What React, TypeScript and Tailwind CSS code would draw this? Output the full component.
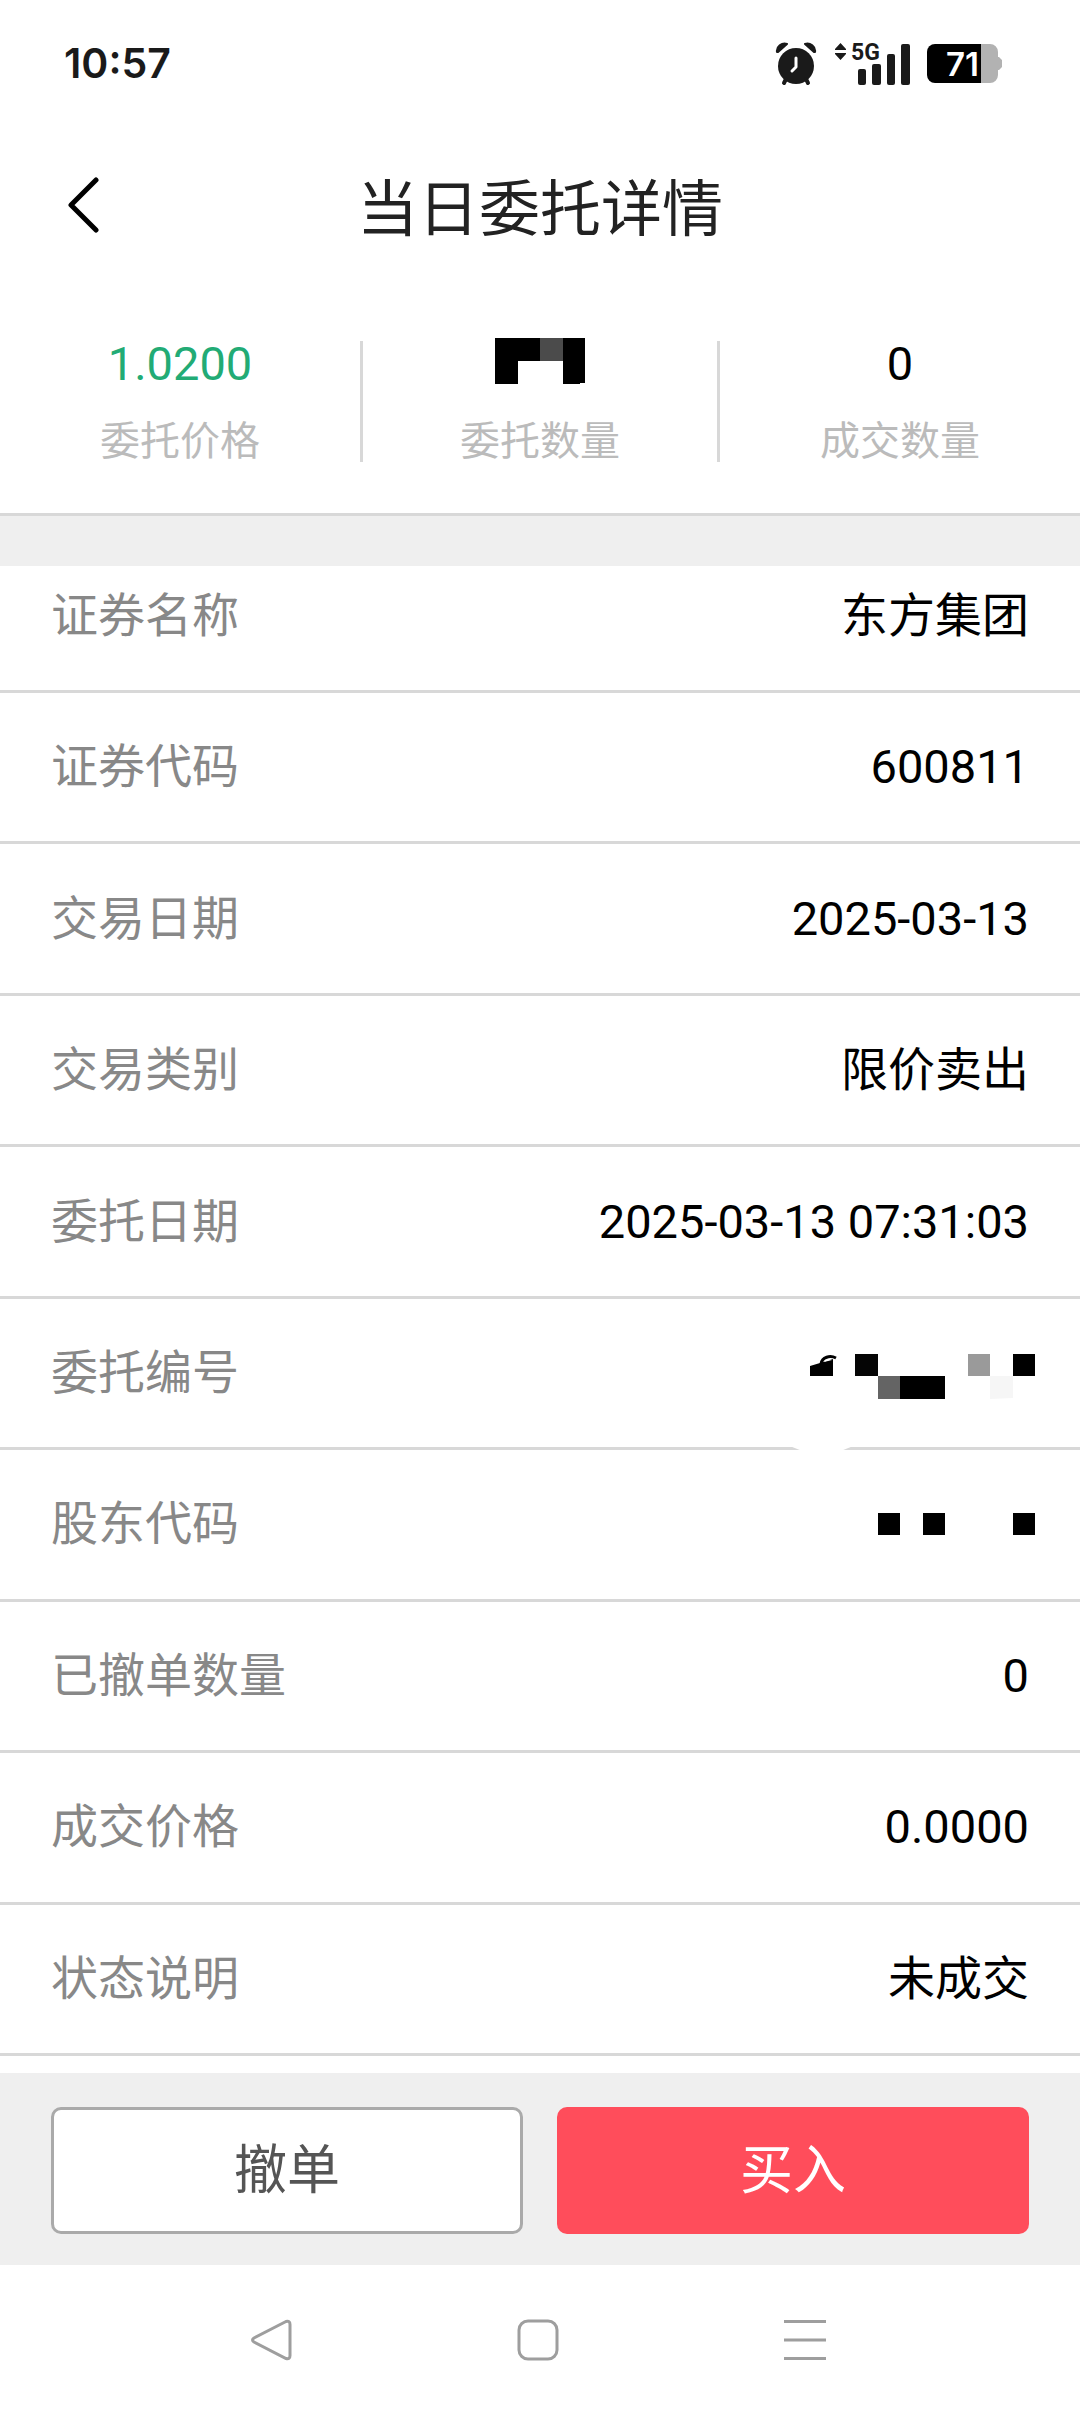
import type { ReactNode } from 'react';

interface DetailItem {
  label: string;
  value: ReactNode;
}

// Mosaic over the order quantity
function MaskedQuantity() {
  return (
    <svg width="90" height="46" viewBox="0 0 90 46" role="img" aria-label="已隐藏" shapeRendering="crispEdges">
      <path d="M0 0h90v45l-11 1H68V23H23v23H0z" fill="#000" />
      <path d="M45 0h23v23H45z" fill="#4b4b4b" />
    </svg>
  );
}

// Mosaic over the order number, the eraser stroke also cuts the row border
function MaskedOrderNo() {
  return (
    <svg
      className="absolute right-[45px] -bottom-[3px]"
      width="245"
      height="100"
      viewBox="0 0 245 100"
      role="img"
      aria-label="已隐藏"
    >
      <path d="M1 96.500h61L52 100.500H11z" fill="#fff" />
      <path d="M20 16l10-3L43 9v17H20z" fill="#000" />
      <path d="M31 14c1-7 9-9 15-6" fill="none" stroke="#000" strokeWidth="3" />
      <path d="M34 12c2-3 5-3 8-2z" fill="#fff" />
      <path d="M65 4h23v22H65z" fill="#050505" />
      <path d="M88 26h22v23H88z" fill="#646464" />
      <path d="M110 26h45v23h-45z" fill="#000" />
      <path d="M178 4h22v22h-22z" fill="#9a9a9a" />
      <path d="M200 26h23v22l-23 1z" fill="#f6f6f6" />
      <path d="M223 4h22v22h-22z" fill="#000" />
    </svg>
  );
}

function MaskedHolderCode() {
  return (
    <svg className="-mr-[6px]" width="157" height="22" viewBox="0 0 157 22" role="img" aria-label="已隐藏">
      <path d="M0 0h22v22H0zM45 0h22v22H45zM135 0h22v22h-22z" fill="#000" />
    </svg>
  );
}

const details: DetailItem[] = [
  { label: '证券代码', value: '600811' },
  { label: '交易日期', value: '2025-03-13' },
  { label: '交易类别', value: '限价卖出' },
  { label: '委托日期', value: '2025-03-13 07:31:03' },
  { label: '委托编号', value: <MaskedOrderNo /> },
  { label: '股东代码', value: <MaskedHolderCode /> },
  { label: '已撤单数量', value: '0' },
  { label: '成交价格', value: '0.0000' },
  { label: '状态说明', value: '未成交' },
];

function StatusBar() {
  return (
    <div className="flex h-[127px] items-center justify-between pr-[78px] pl-16 text-[#1a1a1a]">
      <span className="font-[Inter,sans-serif] text-[41px] leading-none font-semibold">10:57</span>
      <div className="flex items-center">
        <svg width="42" height="44" viewBox="-1 -1 42 44" aria-hidden="true">
          <circle cx="20" cy="23" r="18" fill="currentColor" />
          <path
            d="M1 9C0 4 6-1 11 1L2 9zM39 9C40 4 34-1 29 1l9 8z"
            fill="currentColor"
            stroke="currentColor"
            strokeWidth="2"
            strokeLinejoin="round"
          />
          <path d="M10 36l-2 4M30 36l2 4" stroke="currentColor" strokeWidth="4" strokeLinecap="round" />
          <path
            d="M20 15v9l-4 4"
            stroke="#fff"
            strokeWidth="3"
            strokeLinecap="round"
            strokeLinejoin="round"
            fill="none"
          />
        </svg>
        <svg className="ml-[18px]" width="75" height="58" viewBox="0 -8 75 58" role="img" aria-label="5G">
          <path d="M5.500 0L11 6v1H0V6zM5.500 17L11 11v-1H0v1z" fill="currentColor" />
          <text x="16" y="17" fontSize="23" fontWeight="700" fill="currentColor" fontFamily="Roboto">
            5G
          </text>
          <rect x="23" y="26" width="8" height="16" rx="2" fill="currentColor" />
          <rect x="37" y="21" width="9" height="21" rx="2" fill="currentColor" />
          <rect x="52" y="11" width="8" height="31" rx="2" fill="currentColor" />
          <rect x="66" y="1" width="9" height="41" rx="2" fill="currentColor" />
        </svg>
        <svg className="ml-[17px]" width="75" height="39" viewBox="0 0 75 39" role="img" aria-label="71%">
          <path d="M54 0h9a8 8 0 0 1 8 8v5h1l3 3v7l-3 3h-1v5a8 8 0 0 1-8 8h-9z" fill="#b2b2b2" />
          <path d="M8 0h46v39H8a8 8 0 0 1-8-8V8a8 8 0 0 1 8-8z" fill="#000" />
          <text x="19" y="32" fontSize="33" fontWeight="600" fill="#fff" fontFamily="Inter">
            71
          </text>
        </svg>
      </div>
    </div>
  );
}

function SummaryItem({ label, children }: { label: string; children: ReactNode }) {
  return (
    <div className="flex h-[121px] flex-col items-center gap-9 border-[#d8d8d8] nth-2:border-x-3">
      <dd className="order-1 flex h-11 items-center text-[47px] leading-none">{children}</dd>
      <dt className="order-2 text-[40px] leading-[42px] text-[#bbb]">{label}</dt>
    </div>
  );
}

function DetailRow({ label, value }: DetailItem) {
  return (
    <div className="relative flex min-h-[127px] flex-1 items-center justify-between border-b-3 border-[#d8d8d8] px-[51px]">
      <dt className="text-[#888]">{label}</dt>
      <dd>{value}</dd>
    </div>
  );
}

export default function App() {
  return (
    <div className="flex min-h-screen flex-col bg-white font-[Roboto,'Noto_Sans_CJK_SC',sans-serif] text-black">
      <StatusBar />

      <header className="grid h-[162px] grid-cols-[1fr_auto_1fr] items-center px-16">
        <button type="button" aria-label="返回" className="justify-self-start pb-1.5">
          <svg width="38" height="56" viewBox="0 0 38 56" fill="none">
            <path d="M32 3L7 28l25 25" stroke="#000" strokeWidth="5" strokeLinecap="round" strokeLinejoin="round" />
          </svg>
        </button>
        <h1 className="pt-1 text-[61px] leading-none text-[#222]">当日委托详情</h1>
      </header>

      <dl className="grid grid-cols-3 border-b-3 border-[#d8d8d8] pt-[52px] pb-[51px]">
        <SummaryItem label="委托价格">
          <span className="text-[#22ab75]">1.0200</span>
        </SummaryItem>
        <SummaryItem label="委托数量">
          <span className="pb-1">
            <MaskedQuantity />
          </span>
        </SummaryItem>
        <SummaryItem label="成交数量">0</SummaryItem>
      </dl>
      <div className="h-[50px] bg-[#efefef]" />

      <dl className="flex flex-1 flex-col pb-[17px] text-[47px] leading-[56px]">
        {/* first row is partly scrolled under the grey band */}
        <div className="flex h-[127px] items-center justify-between border-b-3 border-[#d8d8d8] px-[51px] pb-6">
          <dt className="text-[#888]">证券名称</dt>
          <dd>东方集团</dd>
        </div>
        {details.map((item) => (
          <DetailRow key={item.label} label={item.label} value={item.value} />
        ))}
      </dl>

      <div className="grid grid-cols-2 gap-[34px] bg-[#efefef] px-[51px] pt-[34px] pb-[31px] text-[53px] leading-none">
        <button type="button" className="h-[127px] rounded-[10px] border-3 border-[#aaa] bg-white pt-0.5 text-[#555]">
          撤单
        </button>
        <button type="button" className="h-[127px] rounded-[10px] bg-[#ff4d5b] pt-0.5 text-white">
          买入
        </button>
      </div>

      <nav className="flex h-[149px] items-center justify-center gap-[225px] pr-1 text-[#9e9e9e]">
        <button type="button" aria-label="后退">
          <svg width="42" height="42" viewBox="0 0 42 42" fill="none" stroke="currentColor" strokeWidth="3">
            <path d="M36 2.500L4 19q-3 2 0 4l32 16.500q4 1 4-3v-31q0-4-4-3z" />
          </svg>
        </button>
        <button type="button" aria-label="主屏幕">
          <svg width="42" height="42" viewBox="0 0 42 42" fill="none" stroke="currentColor" strokeWidth="3">
            <rect x="2" y="2" width="38" height="38" rx="9" />
          </svg>
        </button>
        <button type="button" aria-label="最近任务">
          <svg width="42" height="42" viewBox="0 0 42 42" stroke="currentColor" strokeWidth="3">
            <path d="M0 2.500h42M0 21h42M0 39.500h42" />
          </svg>
        </button>
      </nav>
    </div>
  );
}
